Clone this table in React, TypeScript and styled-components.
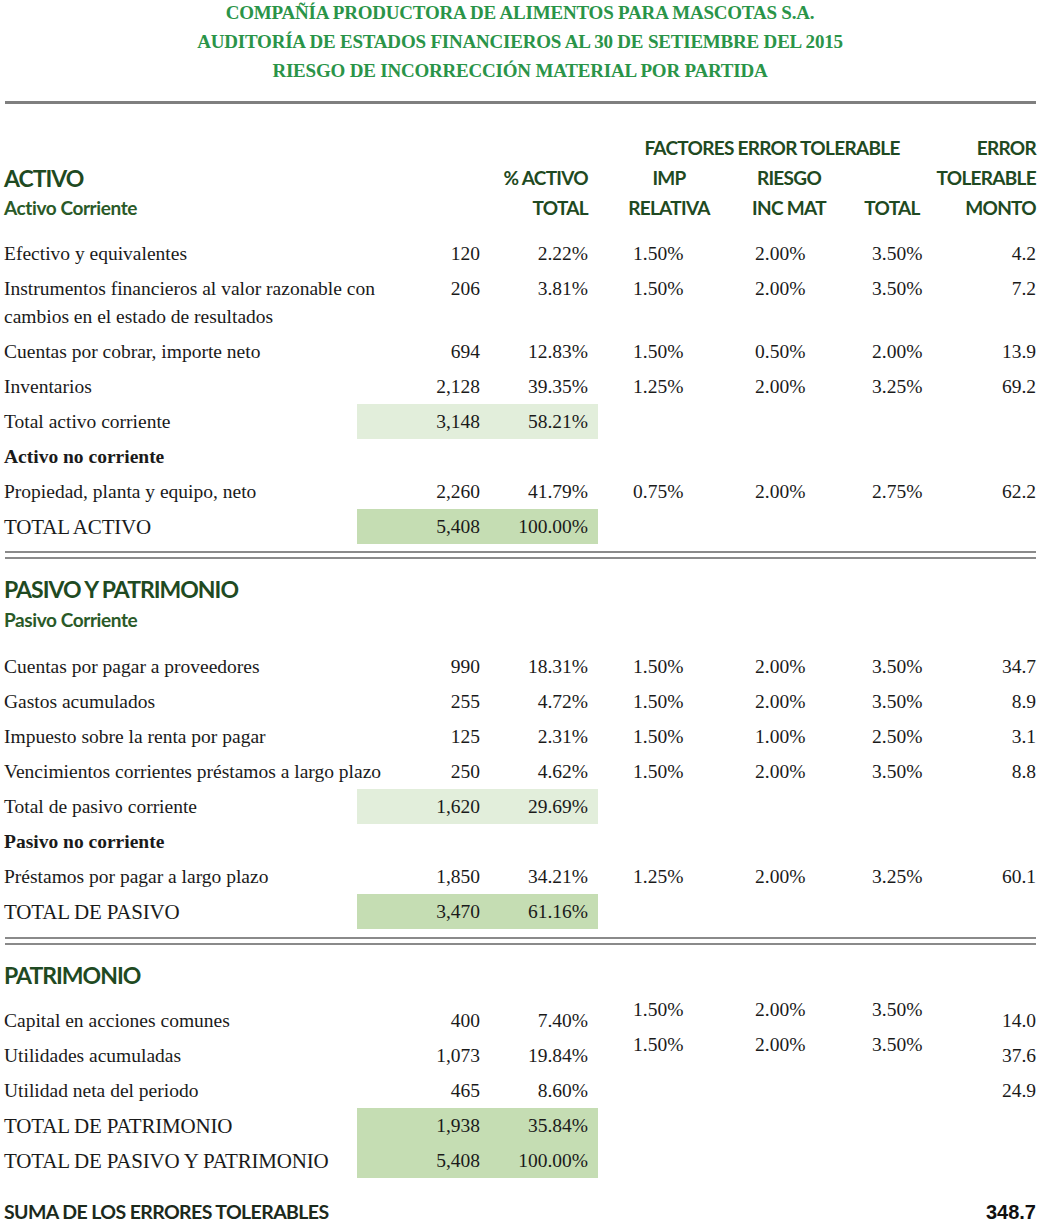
import React from "react";
import styled, { createGlobalStyle, css } from "styled-components";

const GlobalStyle = createGlobalStyle`
  html, body { margin: 0; padding: 0; background: #ffffff; }
  body { font-family: "Liberation Serif", "Times New Roman", serif; color: #1a1a1a; }
`;

const HEAD_FONT = `"Lato", "Liberation Sans", sans-serif`;
const COLS = "353px 133px 108px 142px 98px 108px 90px";

const Page = styled.div`
  width: 1051px;
  box-sizing: border-box;
  padding: 0 15px 0 4px;
`;

const TitleBlock = styled.header`
  margin-top: -2px;
  text-align: center;
  font-family: "Liberation Serif", serif;
  font-weight: 700;
  font-size: 19px;
  line-height: 29px;
  color: #2a9448;
  letter-spacing: -0.2px;
`;

const ThickRule = styled.div`
  margin: 16px 0 0 1px;
  height: 3px;
  background: #7f7f7f;
`;

const DoubleRule = styled.div<{ $top: number }>`
  margin: ${(p) => p.$top}px 0 0 1px;
  height: 4px;
  border-top: 2px solid #8a8a8a;
  border-bottom: 2px solid #8a8a8a;
`;

const Grid = styled.div<{ $top?: number }>`
  display: grid;
  grid-template-columns: ${COLS};
  margin-top: ${(p) => p.$top ?? 0}px;
`;

const justifyMap = { left: "flex-start", right: "flex-end", center: "center" } as const;

const HeadCell = styled.div<{ $align?: "left" | "right" | "center"; $span?: number; $big?: boolean; $sub?: boolean; $pad?: number }>`
  display: flex;
  justify-content: ${(p) => justifyMap[p.$align ?? "left"]};
  font-family: ${HEAD_FONT};
  font-weight: 700;
  color: ${(p) => (p.$sub ? "#2a5a28" : "#1f4a22")};
  font-size: ${(p) => (p.$big ? 23 : 19)}px;
  letter-spacing: ${(p) => (p.$big ? -1 : p.$sub ? -0.4 : -0.7)}px;
  line-height: 30px;
  white-space: nowrap;
  padding-right: ${(p) => p.$pad ?? 0}px;
  ${(p) => p.$span && css`grid-column: span ${p.$span};`}
`;

const SectionHeading = styled.div<{ $top: number }>`
  margin-top: ${(p) => p.$top}px;
  font-family: ${HEAD_FONT};
  font-weight: 700;
  color: #1f4a22;
  font-size: 23px;
  letter-spacing: -1px;
  line-height: 30px;
`;

const SubHeading = styled.div`
  font-family: ${HEAD_FONT};
  font-weight: 700;
  color: #2a5a28;
  font-size: 19px;
  letter-spacing: -0.4px;
  line-height: 32px;
`;

const Row = styled.div<{ $top?: number }>`
  display: grid;
  grid-template-columns: ${COLS};
  font-size: 19.5px;
  line-height: 28px;
  margin-top: ${(p) => p.$top ?? 0}px;
`;

const Label = styled.div<{ $bold?: boolean; $caps?: boolean }>`
  padding: 3.5px 0;
  margin-right: -80px;
  font-weight: ${(p) => (p.$bold ? 700 : 400)};
  ${(p) => p.$caps && css`font-size: 21px; letter-spacing: -0.2px;`}
`;

const Amount = styled.div<{ $shade?: "light" | "dark" }>`
  padding: 3.5px 10px 3.5px 0;
  text-align: right;
  background: ${(p) => (p.$shade === "light" ? "#e2eedb" : p.$shade === "dark" ? "#c5ddb3" : "transparent")};
`;

const Factor = styled.div<{ $indent: number; $lift?: boolean }>`
  padding: 3.5px 0 3.5px ${(p) => p.$indent}px;
  margin-top: ${(p) => (p.$lift ? -11 : 0)}px;
`;

const ErrorCell = styled.div`
  padding: 3.5px 0;
  text-align: right;
`;

const SumRow = styled.div`
  display: flex;
  justify-content: space-between;
  align-items: center;
  margin-top: 19px;
  line-height: 30px;
`;

const SumLabel = styled.div`
  font-family: ${HEAD_FONT};
  font-weight: 700;
  font-size: 19.5px;
  letter-spacing: -0.6px;
  color: #1c2a1c;
`;

const SumValue = styled.div`
  font-family: "Liberation Sans", Arial, sans-serif;
  font-weight: 700;
  font-size: 20px;
  color: #111;
`;

type Line = {
  label: string;
  amount?: string;
  pct?: string;
  imp?: string;
  riesgo?: string;
  total?: string;
  error?: string;
  shade?: "light" | "dark";
  bold?: boolean;
  caps?: boolean;
  lift?: boolean;
};

const activo: Line[] = [
  { label: "Efectivo y equivalentes", amount: "120", pct: "2.22%", imp: "1.50%", riesgo: "2.00%", total: "3.50%", error: "4.2" },
  { label: "Instrumentos financieros al valor razonable con cambios en el estado de resultados", amount: "206", pct: "3.81%", imp: "1.50%", riesgo: "2.00%", total: "3.50%", error: "7.2" },
  { label: "Cuentas por cobrar, importe neto", amount: "694", pct: "12.83%", imp: "1.50%", riesgo: "0.50%", total: "2.00%", error: "13.9" },
  { label: "Inventarios", amount: "2,128", pct: "39.35%", imp: "1.25%", riesgo: "2.00%", total: "3.25%", error: "69.2" },
  { label: "Total activo corriente", amount: "3,148", pct: "58.21%", shade: "light" },
  { label: "Activo no corriente", bold: true },
  { label: "Propiedad, planta y equipo, neto", amount: "2,260", pct: "41.79%", imp: "0.75%", riesgo: "2.00%", total: "2.75%", error: "62.2" },
  { label: "TOTAL ACTIVO", amount: "5,408", pct: "100.00%", shade: "dark", caps: true },
];

const pasivo: Line[] = [
  { label: "Cuentas por pagar a proveedores", amount: "990", pct: "18.31%", imp: "1.50%", riesgo: "2.00%", total: "3.50%", error: "34.7" },
  { label: "Gastos acumulados", amount: "255", pct: "4.72%", imp: "1.50%", riesgo: "2.00%", total: "3.50%", error: "8.9" },
  { label: "Impuesto sobre la renta por pagar", amount: "125", pct: "2.31%", imp: "1.50%", riesgo: "1.00%", total: "2.50%", error: "3.1" },
  { label: "Vencimientos corrientes préstamos a largo plazo", amount: "250", pct: "4.62%", imp: "1.50%", riesgo: "2.00%", total: "3.50%", error: "8.8" },
  { label: "Total de pasivo corriente", amount: "1,620", pct: "29.69%", shade: "light" },
  { label: "Pasivo no corriente", bold: true },
  { label: "Préstamos por pagar a largo plazo", amount: "1,850", pct: "34.21%", imp: "1.25%", riesgo: "2.00%", total: "3.25%", error: "60.1" },
  { label: "TOTAL DE PASIVO", amount: "3,470", pct: "61.16%", shade: "dark", caps: true },
];

const patrimonio: Line[] = [
  { label: "Capital en acciones comunes", amount: "400", pct: "7.40%", imp: "1.50%", riesgo: "2.00%", total: "3.50%", error: "14.0", lift: true },
  { label: "Utilidades acumuladas", amount: "1,073", pct: "19.84%", imp: "1.50%", riesgo: "2.00%", total: "3.50%", error: "37.6", lift: true },
  { label: "Utilidad neta del periodo", amount: "465", pct: "8.60%", error: "24.9" },
  { label: "TOTAL DE PATRIMONIO", amount: "1,938", pct: "35.84%", shade: "dark", caps: true },
  { label: "TOTAL DE PASIVO Y PATRIMONIO", amount: "5,408", pct: "100.00%", shade: "dark", caps: true },
];

function Lines({ items, top }: { items: Line[]; top: number }) {
  return (
    <>
      {items.map((it, i) => (
        <Row key={it.label} $top={i === 0 ? top : 0}>
          <Label $bold={it.bold} $caps={it.caps}>{it.label}</Label>
          <Amount $shade={it.shade}>{it.amount}</Amount>
          <Amount $shade={it.shade}>{it.pct}</Amount>
          <Factor $indent={35} $lift={it.lift}>{it.imp}</Factor>
          <Factor $indent={15} $lift={it.lift}>{it.riesgo}</Factor>
          <Factor $indent={34} $lift={it.lift}>{it.total}</Factor>
          <ErrorCell>{it.error}</ErrorCell>
        </Row>
      ))}
    </>
  );
}

export default function App() {
  return (
    <Page>
      <GlobalStyle />
      <TitleBlock>
        <div>COMPAÑÍA PRODUCTORA DE ALIMENTOS PARA MASCOTAS S.A.</div>
        <div>AUDITORÍA DE ESTADOS FINANCIEROS AL 30 DE SETIEMBRE DEL 2015</div>
        <div>RIESGO DE INCORRECCIÓN MATERIAL POR PARTIDA</div>
      </TitleBlock>
      <ThickRule />

      <Grid $top={29}>
        <div />
        <div />
        <div />
        <HeadCell $span={3} $align="center">FACTORES ERROR TOLERABLE</HeadCell>
        <HeadCell $align="right">ERROR</HeadCell>

        <HeadCell $big>ACTIVO</HeadCell>
        <div />
        <HeadCell $align="right" $pad={10}>% ACTIVO</HeadCell>
        <HeadCell $align="center">IMP</HeadCell>
        <HeadCell $align="center">RIESGO</HeadCell>
        <div />
        <HeadCell $align="right">TOLERABLE</HeadCell>

        <HeadCell $sub>Activo Corriente</HeadCell>
        <div />
        <HeadCell $align="right" $pad={10}>TOTAL</HeadCell>
        <HeadCell $align="center">RELATIVA</HeadCell>
        <HeadCell $align="center">INC MAT</HeadCell>
        <HeadCell $align="center">TOTAL</HeadCell>
        <HeadCell $align="right">MONTO</HeadCell>
      </Grid>

      <Lines items={activo} top={13} />
      <DoubleRule $top={7} />

      <SectionHeading $top={15}>PASIVO Y PATRIMONIO</SectionHeading>
      <SubHeading>Pasivo Corriente</SubHeading>
      <Lines items={pasivo} top={13} />
      <DoubleRule $top={8} />

      <SectionHeading $top={15}>PATRIMONIO</SectionHeading>
      <Lines items={patrimonio} top={13} />

      <SumRow>
        <SumLabel>SUMA DE LOS ERRORES TOLERABLES</SumLabel>
        <SumValue>348.7</SumValue>
      </SumRow>
    </Page>
  );
}
